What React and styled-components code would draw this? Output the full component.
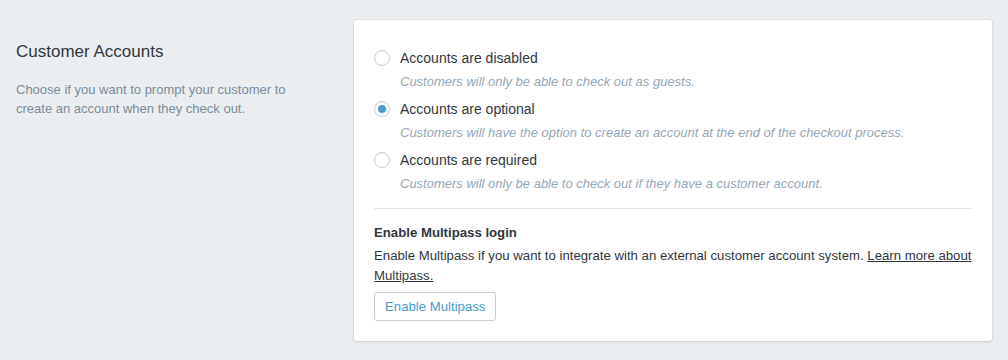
import React, { useState } from "react";
import styled, { createGlobalStyle } from "styled-components";

const Global = createGlobalStyle`
  html, body {
    margin: 0;
    background: #ebeef0;
  }
  body {
    font-family: "Liberation Sans", Arial, sans-serif;
    color: #31373d;
    -webkit-font-smoothing: antialiased;
  }
`;

const options = [
  {
    id: "disabled",
    label: "Accounts are disabled",
    help: "Customers will only be able to check out as guests.",
  },
  {
    id: "optional",
    label: "Accounts are optional",
    help: "Customers will have the option to create an account at the end of the checkout process.",
  },
  {
    id: "required",
    label: "Accounts are required",
    help: "Customers will only be able to check out if they have a customer account.",
  },
];

export default function App() {
  const [choice, setChoice] = useState("optional");

  return (
    <>
      <Global />
      <Page>
        <Annotation>
          <Title>Customer Accounts</Title>
          <Lead>
            Choose if you want to prompt your customer to create an account
            when they check out.
          </Lead>
        </Annotation>
        <Card>
          <RadioList>
            {options.map((o) => (
              <Option key={o.id} onClick={() => setChoice(o.id)}>
                <Row>
                  <Radio checked={choice === o.id} />
                  <Label>{o.label}</Label>
                </Row>
                <Help>{o.help}</Help>
              </Option>
            ))}
          </RadioList>
          <Section>
            <Heading>Enable Multipass login</Heading>
            <Body>
              Enable Multipass if you want to integrate with an external
              customer account system. <Link href="#">Learn more about Multipass.</Link>
            </Body>
            <Button type="button">Enable Multipass</Button>
          </Section>
        </Card>
      </Page>
    </>
  );
}

const Page = styled.div`
  display: flex;
  align-items: flex-start;
  padding: 20px 16px 19px 16px;
`;

const Annotation = styled.div`
  width: 338px;
  padding: 21px 0 0 0;
  flex-shrink: 0;
`;

const Title = styled.h2`
  margin: 0;
  font-size: 17px;
  font-weight: 400;
  line-height: 22px;
  color: #31373d;
`;

const Lead = styled.p`
  margin: 17px 0 0;
  width: 290px;
  font-size: 13px;
  line-height: 19px;
  color: #798c9c;
`;

const Card = styled.div`
  flex: 1;
  background: #fff;
  border-radius: 3px;
  box-shadow: 0 0 0 1px rgba(63, 63, 68, 0.05), 0 1px 3px 0 rgba(63, 63, 68, 0.15);
  padding: 20px;
`;

const RadioList = styled.div`
  display: flex;
  flex-direction: column;
  gap: 7px;
  padding: 8px 0 14px;
  border-bottom: 1px solid #e3e6e9;
`;

const Option = styled.div`
  cursor: pointer;
`;

const Row = styled.div`
  display: flex;
  align-items: center;
  height: 20px;
`;

const Radio = styled.span`
  box-sizing: border-box;
  width: 16px;
  height: 16px;
  border-radius: 50%;
  border: 1px solid #c4cdd5;
  background: #fff;
  margin-right: 10px;
  flex-shrink: 0;
  display: flex;
  align-items: center;
  justify-content: center;
  box-shadow: inset 0 1px 1px rgba(0, 0, 0, 0.04);

  &::after {
    content: "";
    width: 8px;
    height: 8px;
    border-radius: 50%;
    background: #479ccf;
    display: ${(p) => (p.checked ? "block" : "none")};
  }
`;

const Label = styled.span`
  font-size: 14px;
  color: #31373d;
`;

const Help = styled.div`
  margin-top: 4px;
  padding-left: 26px;
  font-size: 13px;
  line-height: 20px;
  font-style: italic;
  color: #95a7b7;
`;

const Section = styled.div`
  padding-top: 15px;
`;

const Heading = styled.h3`
  margin: 0;
  font-size: 13.2px;
  font-weight: 700;
  line-height: 18px;
  color: #31373d;
`;

const Body = styled.p`
  margin: 4px 0 0;
  font-size: 13.2px;
  line-height: 20px;
  color: #31373d;
`;

const Link = styled.a`
  color: #31373d;
  text-decoration: underline;
`;

const Button = styled.button`
  margin-top: 6px;
  height: 29px;
  padding: 0 10px;
  font-family: inherit;
  font-size: 13.2px;
  color: #479ccf;
  background: #fff;
  border: 1px solid #c4cdd5;
  border-radius: 3px;
  cursor: pointer;
`;
